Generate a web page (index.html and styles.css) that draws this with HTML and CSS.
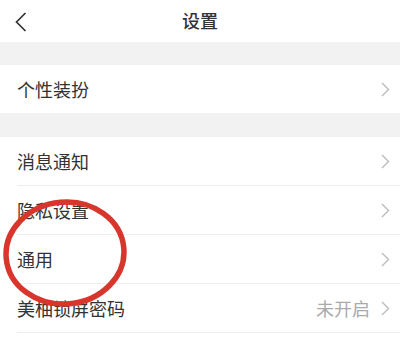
FILE: index.html
```html
<!DOCTYPE html>
<html lang="zh">
<head>
<meta charset="utf-8">
<link rel="stylesheet" href="styles.css">
</head>
<body>
<div class="page">
  <header class="nav">
    <svg class="back" width="12" height="20" viewBox="0 0 12 20"><path d="M10.5 1 L1.5 10 L10.5 19" fill="none" stroke="#333" stroke-width="1.7"/></svg>
    <div class="title">设置</div>
  </header>
  <div class="gap gap1"></div>
  <div class="group">
    <div class="row first"><span class="label">个性装扮</span><svg class="chev" width="9" height="15" viewBox="0 0 9 15"><path d="M1 1 L7.5 7.5 L1 14" fill="none" stroke="#bbb" stroke-width="1.4"/></svg></div>
  </div>
  <div class="gap gap2"></div>
  <div class="group">
    <div class="row"><span class="label">消息通知</span><svg class="chev" width="9" height="15" viewBox="0 0 9 15"><path d="M1 1 L7.5 7.5 L1 14" fill="none" stroke="#bbb" stroke-width="1.4"/></svg></div>
    <div class="row"><span class="label">隐私设置</span><svg class="chev" width="9" height="15" viewBox="0 0 9 15"><path d="M1 1 L7.5 7.5 L1 14" fill="none" stroke="#bbb" stroke-width="1.4"/></svg></div>
    <div class="row"><span class="label">通用</span><svg class="chev" width="9" height="15" viewBox="0 0 9 15"><path d="M1 1 L7.5 7.5 L1 14" fill="none" stroke="#bbb" stroke-width="1.4"/></svg></div>
    <div class="row"><span class="label">美柚锁屏密码</span><span class="value">未开启</span><svg class="chev" width="9" height="15" viewBox="0 0 9 15"><path d="M1 1 L7.5 7.5 L1 14" fill="none" stroke="#bbb" stroke-width="1.4"/></svg></div>
  </div>
  <svg class="circle" width="140" height="120" viewBox="0 0 140 120"><ellipse cx="65" cy="55" rx="59" ry="51" fill="none" stroke="#d8352c" stroke-width="5.5" transform="rotate(-5 65 55)"/></svg>
</div>
</body>
</html>
```

FILE: styles.css
```css
html, body { margin: 0; padding: 0; background: #fff; }
body { font-family: "Noto Sans CJK SC", "Noto Sans", sans-serif; color: #333; }
.page { position: relative; width: 400px; height: 346px; overflow: hidden; }
.nav { height: 42px; display: flex; align-items: center; justify-content: center; position: relative; }
.back { position: absolute; left: 15px; top: 12px; }
.title { font-size: 18px; font-weight: 500; color: #333; margin-top: -2px; }
.gap { background: #f2f2f2; }
.gap1 { height: 23px; }
.gap2 { height: 24px; }
.group { background: #fff; padding-left: 17px; }
.row { height: 48px; display: flex; align-items: center; border-bottom: 1px solid #eeeeee; padding-right: 10px; }
.row.first { border-bottom: none; }
.label { flex: 1; font-size: 18px; color: #333; }
.value { font-size: 18px; color: #aaa; margin-right: 11px; }
.chev { display: block; }
.circle { position: absolute; left: 0; top: 198px; }
```
